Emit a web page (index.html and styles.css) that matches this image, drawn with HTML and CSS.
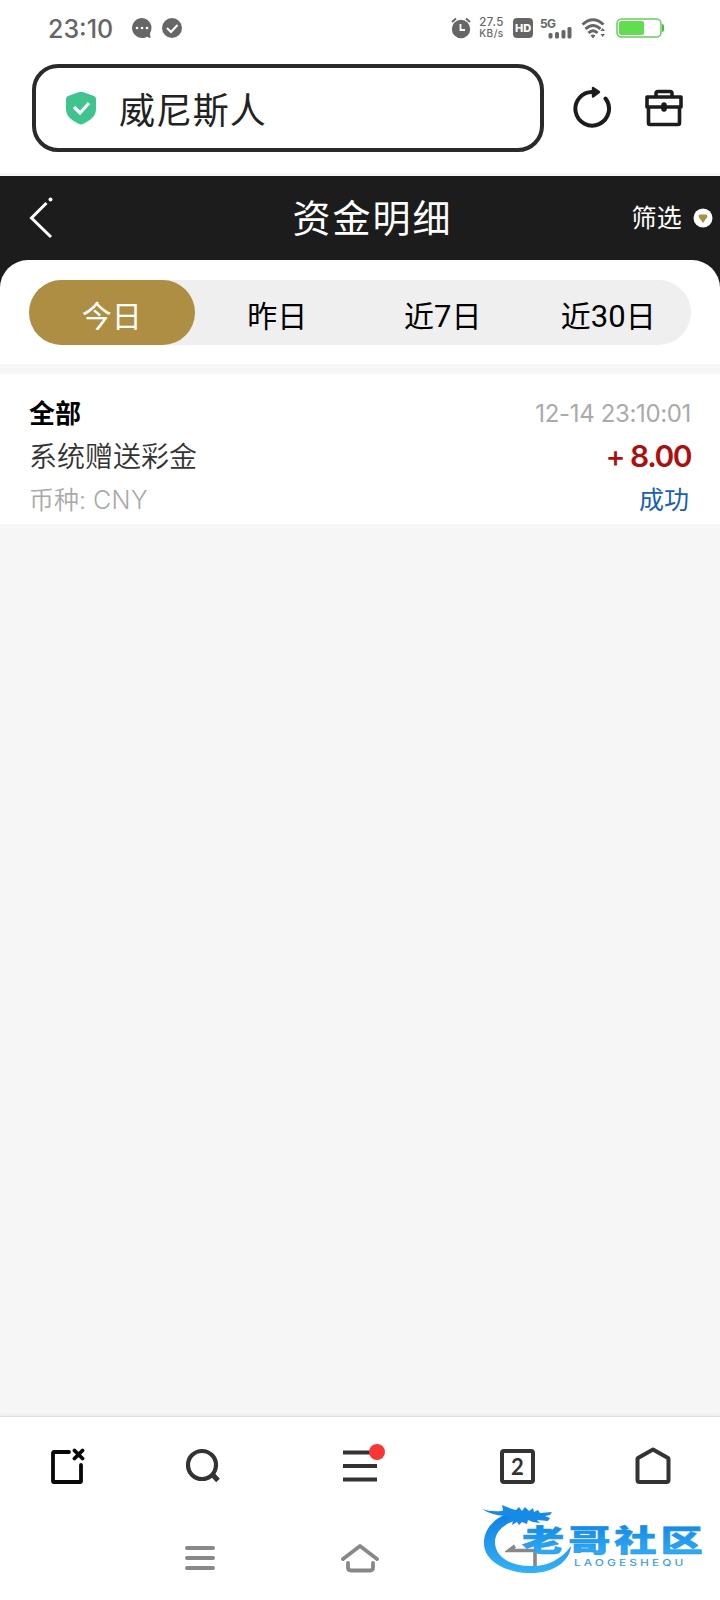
FILE: index.html
```
<!DOCTYPE html>
<html lang="zh-CN">
<head>
  <meta charset="utf-8">
  <title>资金明细</title>
  <link rel="stylesheet" href="styles.css">
</head>
<body>
  <div class="status-bar">
    <span class="clock">23:10</span>
    <svg class="notices" width="52" height="22" viewBox="0 0 52 22">
      <path d="M10 1a10 10 0 1 0 5 18.700l3.500 1.500-.5-5A10 10 0 0 0 10 1z" fill="#666"/>
      <g fill="#fff"><circle cx="5" cy="11" r="1.300"/><circle cx="10" cy="11" r="1.300"/><circle cx="15" cy="11" r="1.300"/></g>
      <circle cx="40" cy="11" r="10" fill="#666"/>
      <path d="M35 11l4 4 6.500-7" fill="none" stroke="#fff" stroke-width="2"/>
    </svg>
    <div class="status-right">
      <svg width="20" height="22" viewBox="0 0 20 22">
        <circle cx="10" cy="12" r="9.200" fill="#666"/>
        <path d="M1 5l4-3.500M19 5l-4-3.500" stroke="#666" stroke-width="2"/>
        <path d="M9.500 7v6h4.500" fill="none" stroke="#fff" stroke-width="1.800"/>
      </svg>
      <div class="speed"><span>27.5</span><span class="unit">KB/s</span></div>
      <span class="hd">HD</span>
      <svg class="signal" width="32" height="22" viewBox="0 0 32 22">
        <text x="0" y="11" class="net" textLength="16">5G</text>
        <g fill="#666"><rect x="8.500" y="16" width="4" height="5.500" rx="1.500"/><rect x="15" y="15" width="4" height="6.500" rx="1.500"/><rect x="21.500" y="13" width="4" height="8.500" rx="1.500"/><rect x="27.500" y="10" width="4" height="11.500" rx="1.500"/></g>
      </svg>
      <svg class="wifi" width="26" height="22" viewBox="0 0 26 22">
        <g fill="none" stroke="#666" stroke-width="3"><path d="M1.500 7.500Q12 -2 22.500 7.500"/><path d="M4.500 12Q12 5 19.500 12"/><path d="M7.500 16Q12 11.500 16.500 16"/></g>
        <path d="M9.500 18.500q2.500-2 5 0L12 21.500zM19.500 14l2.200-3 2.200 3zM19.500 17l2.200 3 2.200-3z" fill="#666"/>
      </svg>
      <svg class="battery" width="49" height="22" viewBox="0 0 49 22">
        <rect x="1" y="2" width="44" height="18" rx="4.500" fill="#fff" stroke="#67cb5e" stroke-width="1.500"/>
        <rect x="3" y="4" width="25" height="14" rx="2" fill="#63dc52"/>
        <path d="M46 7q2 0 2 2v4q0 2-2 2z" fill="#4dbd42"/>
      </svg>
    </div>
  </div>

  <div class="browser-bar">
    <div class="address">
      <svg width="32" height="34" viewBox="0 0 32 34">
        <path d="M13.500 1.200q2.500-1 5 0L29 5q2 .8 2 3v10c0 7-5 11-12.500 14.800q-2.500 1.200-5 0C6 29 1 25 1 18V8q0-2.200 2-3z" fill="#3fc48f"/>
        <path d="M9 16l6 6 9-10" fill="none" stroke="#fff" stroke-width="3.200"/>
      </svg>
      <span>威尼斯人</span>
    </div>
    <svg class="reload" width="40" height="42" viewBox="0 0 40 42">
      <path d="M32.500 12.500A16.800 16.800 0 1 1 20 6" fill="none" stroke="#1c1c1c" stroke-width="4" stroke-linecap="round"/>
      <path d="M20 2v8.500l6-4.500z" fill="#1c1c1c" stroke="#1c1c1c" stroke-width="2.400" stroke-linejoin="round"/>
    </svg>
    <svg class="toolbox" width="38" height="38" viewBox="0 0 38 38" fill="none" stroke="#1c1c1c" stroke-width="3.600" stroke-linejoin="round">
      <path d="M11 7V4.500q0-2 2-2h12q2 0 2 2V7M2 8h34v10H2zM3.500 18v16q0 1.500 1.500 1.500h28q1.500 0 1.500-1.500V18"/>
      <path d="M19 16v4" stroke-width="5.500" stroke-linecap="round"/>
    </svg>
  </div>

  <div class="page-header">
    <svg class="back" width="24" height="42" viewBox="0 0 24 42">
      <path d="M17.500 6L2.500 21l19.500 19" fill="none" stroke="#fff" stroke-width="3"/>
      <circle cx="21.500" cy="2.500" r="2" fill="#fff"/>
    </svg>
    <h1>资金明细</h1>
    <div class="filter">
      <span>筛选</span>
      <svg width="20" height="20" viewBox="0 0 20 20">
        <circle cx="10" cy="10" r="9.500" fill="#fff"/>
        <path d="M6.500 6.500h7q1.500 1 .5 3L10 15 6 9.500q-1-2 .5-3z" fill="#a99145"/>
      </svg>
    </div>
  </div>

  <div class="tabs-panel">
    <div class="tabs">
      <span class="tab active">今日</span>
      <span class="tab">昨日</span>
      <span class="tab">近<span class="num">7</span>日</span>
      <span class="tab">近<span class="num">30</span>日</span>
    </div>
  </div>

  <div class="record">
    <div class="row"><b class="type">全部</b><span class="time">12-14 23:10:01</span></div>
    <div class="row"><span class="name">系统赠送彩金</span><span class="amount"><span class="sign">+</span> 8.00</span></div>
    <div class="row"><span class="currency">币种: <span class="code">CNY</span></span><span class="state">成功</span></div>
  </div>

  <div class="bottom">
    <div class="toolbar">
      <svg width="34" height="36" viewBox="0 0 34 36" fill="none" stroke="#080808" stroke-width="3.800" stroke-linecap="round" stroke-linejoin="round">
        <path d="M18 4H3q-1 0-1 1v28q0 1 1 1h26q1 0 1-1V17M23.500 2.500l8 8M31.500 2.500l-8 8"/>
      </svg>
      <svg class="search" width="34" height="36" viewBox="0 0 34 36" fill="none" stroke="#333">
        <circle cx="16" cy="17" r="14" stroke-width="4.200"/>
        <path d="M26 26l6 6.500" stroke-width="5"/>
      </svg>
      <div class="menu">
        <svg width="34" height="36" viewBox="0 0 34 36" stroke="#333" stroke-width="4"><path d="M0 4.500h34M0 18h34M0 31.500h34"/></svg>
        <i class="dot"></i>
      </div>
      <div class="tab-count">2</div>
      <svg width="36" height="38" viewBox="0 0 36 38">
        <path d="M18 2.500L33 11q.5.500.5 1v21q0 2-2 2h-27q-2 0-2-2V12q0-.5.5-1z" fill="none" stroke="#333" stroke-width="4" stroke-linejoin="round"/>
      </svg>
    </div>
    <div class="system-nav">
      <svg width="30" height="26" viewBox="0 0 30 26" stroke="#888" stroke-width="4" stroke-linecap="round"><path d="M2 3h26M2 13h26M2 23h26"/></svg>
      <svg width="38" height="30" viewBox="0 0 38 30" fill="none" stroke="#888" stroke-width="3.800" stroke-linecap="round" stroke-linejoin="round"><path d="M2 16L19 3l17 13M7 20v4.500q0 3 3 3h19q3 0 3-3V20"/></svg>
      <svg width="32" height="28" viewBox="0 0 32 28" fill="none" stroke="#888" stroke-width="3.600"><path d="M10 2L4 6.500h26V26"/></svg>
    </div>
    <svg class="logo" width="228" height="80" viewBox="0 0 228 80">
      <defs>
        <linearGradient id="blue" x1="0" y1="0" x2="0" y2="1">
          <stop offset="0" stop-color="#0c7fe2"/>
          <stop offset="1" stop-color="#35b2f5"/>
        </linearGradient>
      </defs>
      <path d="M32 12C12 16 1 30 2 45c1 15 19 27 44 28 24 1 42-11 43-27-10 14-25 21-41 20C27 66 13 56 13 42c0-11 10-19 25-23z" fill="url(#blue)"/>
      <path d="M0 9q8 3 20 2l1-1-1-5 10 4 4 1 3-3 3 4 3-4 4 4 4-3 1 4 4-2 2 3 12-1-2 3-5 1 5 2-2 3-11-1 3 3-7-1-5-2-1 4-5-2-3 3-2-3-5 3 1-5-6 1 3-4-5-1Q9 15 0 9z" fill="#168be6"/>
      <text class="logo-name" transform="translate(40 51) scale(1.320 .94)">老哥社区</text>
      <text class="logo-sub" transform="translate(92 66) scale(1.400 1)" textLength="78">LAOGESHEQU</text>
    </svg>
  </div>
</body>
</html>
```

FILE: styles.css
```
* {
  box-sizing: border-box;
}

body {
  margin: 0;
  height: 1600px;
  display: flex;
  flex-direction: column;
  background: #f6f6f6;
  font-family: Inter, "Noto Sans CJK SC", sans-serif;
  overflow: hidden;
}

svg {
  display: block;
  flex-shrink: 0;
}

.status-bar {
  height: 64px;
  padding: 0 55px 8px 48px;
  display: flex;
  align-items: center;
  background: #fff;
  color: #666;
}

.clock {
  width: 84px;
  font-size: 25px;
  font-weight: 500;
  padding-top: 2px;
}

.status-right {
  margin-left: auto;
  display: flex;
  align-items: center;
}

.speed {
  width: 27px;
  margin: 0 8px 0 7px;
  font-size: 11.5px;
  line-height: 11px;
  font-weight: 500;
  letter-spacing: 0.5px;
  text-align: center;
  display: flex;
  flex-direction: column;
}

.unit {
  font-size: 10px;
  line-height: 11px;
}

.hd {
  width: 20px;
  height: 20px;
  border-radius: 4px;
  background: #666;
  color: #fff;
  font-size: 11px;
  line-height: 20px;
  font-weight: 800;
  text-align: center;
}

.signal {
  margin-left: 7px;
  overflow: visible;
}

.net {
  font-size: 12px;
  font-weight: 700;
  fill: #666;
}

.wifi {
  margin-left: 9px;
}

.battery {
  margin-left: 9px;
}

.browser-bar {
  height: 112px;
  padding: 0 36px 0 32px;
  display: flex;
  align-items: flex-start;
  background: #fff;
  border-bottom: 3px solid #f6f6f6;
}

.address {
  width: 512px;
  height: 88px;
  padding-left: 29px;
  display: flex;
  align-items: center;
  border: 4px solid #2a2a2a;
  border-radius: 26px;
  color: #222;
  font-size: 36px;
}

.address span {
  margin-left: 22px;
  letter-spacing: 0.9px;
}

.reload {
  margin: 22px 0 0 29px;
}

.toolbox {
  margin: 25px 1px 0 auto;
}

.page-header {
  height: 112px;
  margin-bottom: -28px;
  padding: 0 7px 28px 29px;
  display: grid;
  grid-template-columns: 1fr auto 1fr;
  align-items: center;
  background: #1c1c1c;
  color: #fff;
}

.page-header h1 {
  margin: 0 0 6px;
  padding-left: 3px;
  font-size: 38px;
  font-weight: 400;
  letter-spacing: 2px;
}

.filter {
  display: flex;
  justify-content: flex-end;
  align-items: center;
  gap: 11px;
  font-size: 25px;
}

.filter span {
  margin-bottom: 4px;
  letter-spacing: 0.3px;
}

.tabs-panel {
  height: 104px;
  padding: 20px 29px;
  background: #fff;
  border-radius: 28px 28px 0 0;
}

.tabs {
  height: 65px;
  display: flex;
  border-radius: 33px;
  background: #efefef;
}

.tab {
  flex: 1 1 0;
  padding-top: 4px;
  font-size: 30px;
  line-height: 65px;
  text-align: center;
  color: #000;
}

.num {
  font-size: 31px;
  font-family: Roboto, sans-serif;
}

.tab.active {
  border-radius: 33px;
  background: #ad8e43;
  color: #fff;
}

.record {
  height: 150px;
  margin-top: 10px;
  padding: 16px 29px 0;
  background: #fff;
}

.row {
  height: 43px;
  display: flex;
  justify-content: space-between;
  align-items: center;
}

.type {
  font-size: 26px;
  color: #000;
}

.time {
  margin-top: 3px;
  font-size: 24px;
  color: #aaa;
  letter-spacing: -0.35px;
}

.name {
  font-size: 28px;
  font-weight: 350;
  color: #333;
}

.amount {
  margin-top: 2px;
  font-size: 30px;
  font-weight: 600;
  letter-spacing: -1.5px;
  color: #ab1010;
}

.sign {
  font-weight: 500;
}

.currency {
  font-size: 25px;
  font-weight: 350;
  color: #aaa;
}

.code {
  letter-spacing: 0.3px;
}

.state {
  font-size: 25px;
  margin-right: 2px;
  color: #1760b5;
}

.bottom {
  position: relative;
  height: 184px;
  margin-top: auto;
  border-top: 1px solid #e0e0e0;
  background: #fff;
  box-shadow: 0 -1px 4px rgba(0, 0, 0, 0.06);
}

.toolbar {
  height: 98px;
  padding: 0 49px 0 51px;
  display: flex;
  align-items: center;
}

.search {
  margin-left: 101px;
}

.menu {
  position: relative;
  margin: 0 123px 0 123px;
}

.dot {
  position: absolute;
  top: -4px;
  right: -8px;
  width: 16px;
  height: 16px;
  border-radius: 50%;
  background: #fa3535;
}

.tab-count {
  width: 35px;
  height: 35px;
  margin-right: auto;
  border: 4px solid #333;
  border-radius: 4px;
  color: #333;
  font-family: Lato, sans-serif;
  font-size: 22px;
  line-height: 27px;
  font-weight: 700;
  text-align: center;
}

.system-nav {
  height: 85px;
  padding: 0 183px 0 185px;
  display: flex;
  justify-content: space-between;
  align-items: center;
}

.logo {
  position: absolute;
  left: 482px;
  top: 83px;
}

.logo-name {
  font-family: "Noto Sans CJK SC", sans-serif;
  font-size: 32px;
  font-weight: 900;
  letter-spacing: 3px;
  fill: url(#blue);
  stroke: #2496ec;
  stroke-width: 0.6px;
}

.logo-sub {
  font-size: 8.5px;
  font-weight: 500;
  fill: #3aa0e8;
}
```
